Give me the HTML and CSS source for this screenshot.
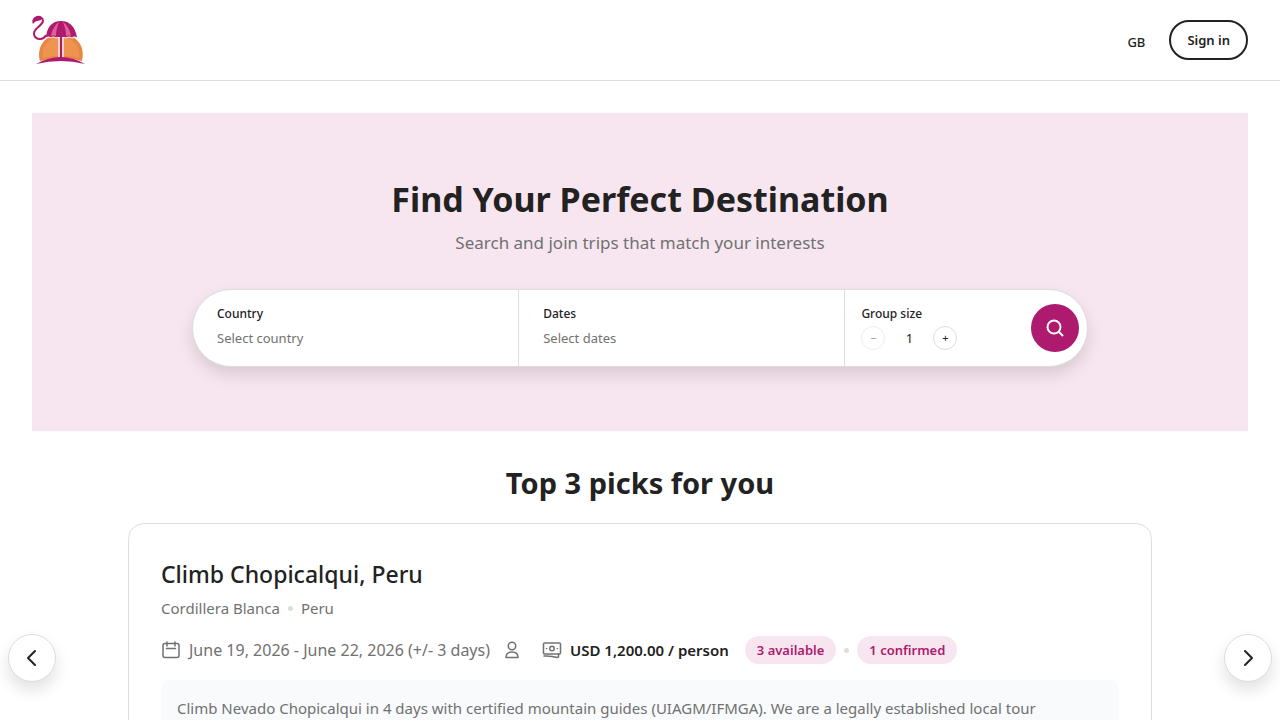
FILE: index.html
```html
<!DOCTYPE html>
<html lang="en">
<head>
    <meta charset="UTF-8">
    <meta name="viewport" content="width=device-width, initial-scale=1.0">
    <title>Find Your Perfect Destination</title>
    <link rel="stylesheet" href="styles.css">
</head>
<body>
    <header class="header">
        <a class="logo" href="#" aria-label="Home">
            <svg width="56" height="52" viewBox="0 0 56 52" fill="none">
                <!-- sun -->
                <path d="M8 47C4 32 14 20 29 20s25 12 21 27Q29 41 8 47z" fill="#e98645"/>
                <path d="M11 44C9 32 17 23 29 23s20 9 18 21Q29 39 11 44z" fill="#ee9350"/>
                <!-- umbrella -->
                <path d="M26 22h6v21h-6z" fill="#f9d3c8"/>
                <path d="M14 23C15 13 20 7 29 7s14 6 16 16q-3-1-5 0-3-1-6 0h-10q-3-1-5 0-2-1-5 0z" fill="#ad1a6e"/>
                <path d="M19 22c1-6 4-11 8-14-2 5-3 9-3 14q-3-1-5 0zM39 22c-1-6-4-11-8-14 2 5 3 9 3 14q3-1 5 0z" fill="#e0609c"/>
                <path d="M14 24q3-1 5 0 2-2 5 0 3-1 5 0 3-1 5 0 3-2 6 0 2-1 5 0" stroke="#fbe3e6"/>
                <path d="M29 20v25" stroke="#ad1a6e" stroke-width="2"/>
                <path d="M4 50Q29 36 53 50Q29 44 4 50z" fill="#ad1a6e"/>
                <!-- flamingo neck -->
                <path d="M14 21C11 27 3 26 2 20c-1-5 8-8 9-13 0-3-3-5-6-4" stroke="#ad1a6e" stroke-width="2"/>
                <path d="M1 10C-1 6 2 2 6 2c3 0 5 2 3 4-2 1-5 0-8 4z" fill="#ad1a6e"/>
            </svg>
        </a>
        <nav class="header-actions">
            <button class="region-btn" type="button">GB</button>
            <button class="signin-btn" type="button">Sign in</button>
        </nav>
    </header>

    <main>
        <section class="hero">
            <h1>Find Your Perfect Destination</h1>
            <p class="hero-subtitle">Search and join trips that match your interests</p>
            <form class="search-bar">
                <div class="search-field">
                    <label for="country">Country</label>
                    <input type="text" id="country" placeholder="Select country">
                </div>
                <div class="search-field">
                    <label for="dates">Dates</label>
                    <input type="text" id="dates" placeholder="Select dates">
                </div>
                <div class="search-group">
                    <div class="group-size">
                        <label for="groupSize">Group size</label>
                        <div class="stepper">
                            <button type="button" aria-label="Fewer people" disabled>−</button>
                            <output id="groupSize">1</output>
                            <button type="button" aria-label="More people">+</button>
                        </div>
                    </div>
                    <button class="search-btn" type="submit" aria-label="Search">
                        <svg width="20" height="20" viewBox="0 0 20 20" fill="none" stroke="currentColor" stroke-width="2">
                            <circle cx="9" cy="9" r="6.500"/>
                            <path d="M13.500 13.500l4.500 4.500"/>
                        </svg>
                    </button>
                </div>
            </form>
        </section>

        <section class="picks">
            <h2>Top 3 picks for you</h2>
            <div class="carousel">
                <button class="arrow-btn" type="button" aria-label="Previous trip">
                    <svg width="24" height="24" viewBox="0 0 24 24" fill="none" stroke="currentColor" stroke-width="2" stroke-linecap="round" stroke-linejoin="round">
                        <path d="M15 5l-7 7 7 7"/>
                    </svg>
                </button>
                <article class="trip-card">
                    <h3>Climb Chopicalqui, Peru</h3>
                    <div class="trip-place">
                        <span>Cordillera Blanca</span>
                        <span class="dot"></span>
                        <span>Peru</span>
                    </div>
                    <div class="trip-meta">
                        <div class="meta-item dates">
                            <svg width="20" height="20" viewBox="0 0 20 20" fill="none" stroke="currentColor" stroke-width="1.5" stroke-linecap="round">
                                <rect x="2" y="3.500" width="16" height="14" rx="2"/>
                                <path d="M6 2v4M14 2v4M5.500 8.500h9"/>
                            </svg>
                            <span>June 19, 2026 - June 22, 2026 (+/- 3 days)</span>
                        </div>
                        <svg class="person-icon" width="20" height="20" viewBox="0 0 20 20" fill="none" stroke="currentColor" stroke-width="1.5" stroke-linejoin="round">
                            <circle cx="10" cy="6" r="3.750"/>
                            <path d="M4 17.500c0-3.500 2-5.500 6-5.500s6 2 6 5.500z"/>
                        </svg>
                        <div class="meta-item price">
                            <svg width="20" height="20" viewBox="0 0 20 20" fill="none" stroke="currentColor" stroke-width="1.5" stroke-linecap="round" stroke-linejoin="round">
                                <rect x="1.500" y="3" width="17" height="11" rx="1"/>
                                <circle cx="10" cy="8.500" r="2.250"/>
                                <path d="M4.500 8.500h.2M15.300 8.500h.2M2 16c5-.2 9 0 13 1.500l1.500-.5v-3"/>
                            </svg>
                            <span>USD 1,200.00 / person</span>
                        </div>
                        <div class="badges">
                            <span class="badge">3 available</span>
                            <span class="dot"></span>
                            <span class="badge">1 confirmed</span>
                        </div>
                    </div>
                    <p class="trip-description">Climb Nevado Chopicalqui in 4 days with certified mountain guides (UIAGM/IFMGA). We are a legally established local tour organization based in Huaraz.</p>
                </article>
                <button class="arrow-btn" type="button" aria-label="Next trip">
                    <svg width="24" height="24" viewBox="0 0 24 24" fill="none" stroke="currentColor" stroke-width="2" stroke-linecap="round" stroke-linejoin="round">
                        <path d="M9 5l7 7-7 7"/>
                    </svg>
                </button>
            </div>
        </section>
    </main>
</body>
</html>
```
FILE: styles.css
```css
* {
    margin: 0;
    padding: 0;
    box-sizing: border-box;
}

body {
    font-family: "Segoe UI", "Noto Sans", sans-serif;
    font-size: 15px;
    line-height: 24px;
    background-color: #ffffff;
    color: #222222;
}

button,
input {
    font: inherit;
    color: inherit;
}

button {
    cursor: pointer;
}

svg {
    display: block;
    flex-shrink: 0;
}

/* Header */
.header {
    display: flex;
    justify-content: space-between;
    align-items: center;
    padding: 14px 32px;
    border-bottom: 1px solid #dddddd;
}

.header-actions {
    display: flex;
    align-items: center;
    gap: 24px;
}

.region-btn {
    padding-top: 4px;
    border: none;
    background: none;
    font-size: 13px;
    font-weight: 500;
}

.signin-btn {
    height: 40px;
    padding: 0 16px;
    border: 2px solid #222222;
    border-radius: 20px;
    background-color: #ffffff;
    font-size: 13px;
    font-weight: 600;
}

/* Hero */
.hero {
    margin: 32px 32px 0;
    padding: 64px 32px;
    background-color: #f7e6ef;
    text-align: center;
}

h1 {
    font-size: 34px;
    font-weight: 700;
    line-height: 44px;
}

.hero-subtitle {
    margin: 8px 0 32px;
    font-size: 17px;
    line-height: 28px;
    color: #717171;
}

.search-bar {
    display: grid;
    grid-template-columns: 27fr 27fr 20fr;
    max-width: 896px;
    margin: 0 auto;
    border: 1px solid #dddddd;
    border-radius: 40px;
    background-color: #ffffff;
    box-shadow: 0 8px 16px rgba(0, 0, 0, 0.12);
    text-align: left;
}

.search-field {
    display: flex;
    flex-direction: column;
    gap: 4px;
    min-width: 0;
    padding: 16px 24px;
    border-right: 1px solid #dddddd;
}

.search-bar label {
    font-size: 12px;
    font-weight: 500;
    line-height: 16px;
}

.search-field input {
    width: 100%;
    border: none;
    outline: none;
    background: none;
    font-size: 13px;
}

.search-field input::placeholder {
    color: #717171;
}

.search-group {
    display: flex;
    justify-content: space-between;
    align-items: center;
    padding: 0 8px 0 16px;
}

.group-size {
    display: flex;
    flex-direction: column;
    gap: 4px;
}

.stepper {
    display: flex;
    align-items: center;
    gap: 8px;
}

.stepper button {
    width: 24px;
    height: 24px;
    border: 1px solid #dddddd;
    border-radius: 50%;
    background-color: #ffffff;
    font-size: 11px;
    line-height: 16px;
}

.stepper button:disabled {
    opacity: 0.5;
    cursor: default;
}

.stepper output {
    width: 32px;
    font-size: 13px;
    text-align: center;
}

.search-btn {
    display: flex;
    justify-content: center;
    align-items: center;
    width: 48px;
    height: 48px;
    border: none;
    border-radius: 50%;
    background-color: #ad1a6e;
    color: #ffffff;
}

/* Top picks */
.picks {
    padding: 32px 8px;
}

h2 {
    margin-bottom: 20px;
    font-size: 29px;
    line-height: 40px;
    text-align: center;
}

.carousel {
    display: flex;
    justify-content: space-between;
    align-items: center;
    gap: 16px;
}

.arrow-btn {
    display: flex;
    flex-shrink: 0;
    justify-content: center;
    align-items: center;
    width: 48px;
    height: 48px;
    border: 1px solid #dddddd;
    border-radius: 50%;
    background-color: #ffffff;
    box-shadow: 0 8px 16px rgba(0, 0, 0, 0.12);
}

.trip-card {
    flex: 1;
    max-width: 1024px;
    padding: 32px;
    border: 1px solid #dddddd;
    border-radius: 16px;
}

h3 {
    font-size: 23px;
    font-weight: 500;
    line-height: 36px;
}

.trip-place,
.trip-meta,
.meta-item,
.badges {
    display: flex;
    align-items: center;
    gap: 8px;
}

.trip-place {
    margin-top: 4px;
    color: #717171;
}

.dot {
    width: 5px;
    height: 5px;
    border-radius: 50%;
    background-color: #dddddd;
}

.trip-meta {
    flex-wrap: wrap;
    gap: 12px;
    margin: 16px 0;
    color: #717171;
}

.dates {
    font-size: 16px;
}

.person-icon {
    margin-right: 8px;
}

.price span {
    font-weight: 600;
    color: #222222;
}

.badges {
    margin-left: 4px;
}

.badge {
    padding: 2px 12px;
    border-radius: 14px;
    background-color: #f7e6ef;
    color: #ad1a6e;
    font-size: 13px;
    font-weight: 600;
}

.trip-description {
    padding: 16px;
    border-radius: 8px;
    background-color: #f8fafb;
    color: #717171;
}
```
